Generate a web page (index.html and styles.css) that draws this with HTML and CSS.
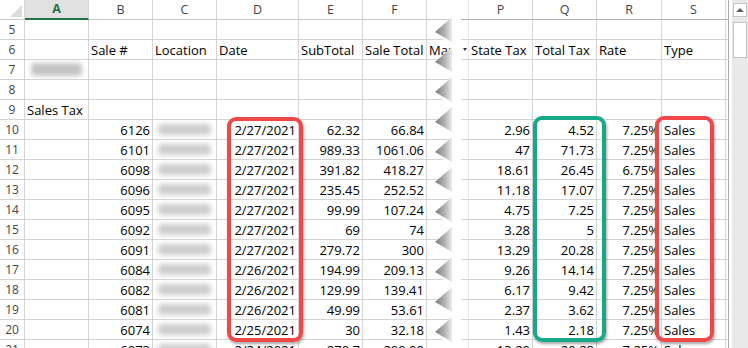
FILE: index.html
```html
<!DOCTYPE html>
<html>
<head>
<meta charset="utf-8">
<title>Sales Tax</title>
<link rel="stylesheet" href="styles.css">
</head>
<body>
<div class="app">
  <div class="pane left">
    <div class="hd corner"><svg width="24" height="19" viewBox="0 0 24 19"><polygon points="10,17 22,5 22,17" fill="#dcdcdc"/></svg></div>
    <div class="hd sel">A</div><div class="hd">B</div><div class="hd">C</div><div class="hd">D</div><div class="hd">E</div><div class="hd">F</div><div class="hd g"></div>

    <div class="rh">5</div><div class="c"></div><div class="c"></div><div class="c"></div><div class="c"></div><div class="c"></div><div class="c"></div><div class="c g"></div>
    <div class="rh">6</div><div class="c"></div><div class="c">Sale #</div><div class="c">Location</div><div class="c">Date</div><div class="c">SubTotal</div><div class="c">Sale Total</div><div class="c g">Manager</div>
    <div class="rh">7</div><div class="c"><span class="blur wide"></span></div><div class="c"></div><div class="c"></div><div class="c"></div><div class="c"></div><div class="c"></div><div class="c g"></div>
    <div class="rh">8</div><div class="c"></div><div class="c"></div><div class="c"></div><div class="c"></div><div class="c"></div><div class="c"></div><div class="c g"></div>
    <div class="rh">9</div><div class="c">Sales Tax</div><div class="c"></div><div class="c"></div><div class="c"></div><div class="c"></div><div class="c"></div><div class="c g"></div>

    <div class="rh">10</div><div class="c"></div><div class="c n">6126</div><div class="c"><span class="blur"></span></div><div class="c n">2/27/2021</div><div class="c n">62.32</div><div class="c n">66.84</div><div class="c g"></div>
    <div class="rh">11</div><div class="c"></div><div class="c n">6101</div><div class="c"><span class="blur"></span></div><div class="c n">2/27/2021</div><div class="c n">989.33</div><div class="c n">1061.06</div><div class="c g"></div>
    <div class="rh">12</div><div class="c"></div><div class="c n">6098</div><div class="c"><span class="blur"></span></div><div class="c n">2/27/2021</div><div class="c n">391.82</div><div class="c n">418.27</div><div class="c g"></div>
    <div class="rh">13</div><div class="c"></div><div class="c n">6096</div><div class="c"><span class="blur"></span></div><div class="c n">2/27/2021</div><div class="c n">235.45</div><div class="c n">252.52</div><div class="c g"></div>
    <div class="rh">14</div><div class="c"></div><div class="c n">6095</div><div class="c"><span class="blur"></span></div><div class="c n">2/27/2021</div><div class="c n">99.99</div><div class="c n">107.24</div><div class="c g"></div>
    <div class="rh">15</div><div class="c"></div><div class="c n">6092</div><div class="c"><span class="blur"></span></div><div class="c n">2/27/2021</div><div class="c n">69</div><div class="c n">74</div><div class="c g"></div>
    <div class="rh">16</div><div class="c"></div><div class="c n">6091</div><div class="c"><span class="blur"></span></div><div class="c n">2/27/2021</div><div class="c n">279.72</div><div class="c n">300</div><div class="c g"></div>
    <div class="rh">17</div><div class="c"></div><div class="c n">6084</div><div class="c"><span class="blur"></span></div><div class="c n">2/26/2021</div><div class="c n">194.99</div><div class="c n">209.13</div><div class="c g"></div>
    <div class="rh">18</div><div class="c"></div><div class="c n">6082</div><div class="c"><span class="blur"></span></div><div class="c n">2/26/2021</div><div class="c n">129.99</div><div class="c n">139.41</div><div class="c g"></div>
    <div class="rh">19</div><div class="c"></div><div class="c n">6081</div><div class="c"><span class="blur"></span></div><div class="c n">2/26/2021</div><div class="c n">49.99</div><div class="c n">53.61</div><div class="c g"></div>
    <div class="rh">20</div><div class="c"></div><div class="c n">6074</div><div class="c"><span class="blur"></span></div><div class="c n">2/25/2021</div><div class="c n">30</div><div class="c n">32.18</div><div class="c g"></div>
    <div class="rh">21</div><div class="c"></div><div class="c n">6073</div><div class="c"><span class="blur"></span></div><div class="c n">2/24/2021</div><div class="c n">279.7</div><div class="c n">299.99</div><div class="c g"></div>
  </div>

  <div class="pane right">
    <div class="hd p"></div><div class="hd">P</div><div class="hd">Q</div><div class="hd">R</div><div class="hd">S</div><div class="hd e"></div>

    <div class="c p"></div><div class="c"></div><div class="c"></div><div class="c"></div><div class="c"></div><div class="c e"></div>
    <div class="c p dd"><span class="arrow"></span></div><div class="c">State Tax</div><div class="c">Total Tax</div><div class="c">Rate</div><div class="c">Type</div><div class="c e"></div>
    <div class="c p"></div><div class="c"></div><div class="c"></div><div class="c"></div><div class="c"></div><div class="c e"></div>
    <div class="c p"></div><div class="c"></div><div class="c"></div><div class="c"></div><div class="c"></div><div class="c e"></div>
    <div class="c p"></div><div class="c"></div><div class="c"></div><div class="c"></div><div class="c"></div><div class="c e"></div>

    <div class="c p"></div><div class="c n">2.96</div><div class="c n">4.52</div><div class="c n">7.25%</div><div class="c">Sales</div><div class="c e"></div>
    <div class="c p"></div><div class="c n">47</div><div class="c n">71.73</div><div class="c n">7.25%</div><div class="c">Sales</div><div class="c e"></div>
    <div class="c p"></div><div class="c n">18.61</div><div class="c n">26.45</div><div class="c n">6.75%</div><div class="c">Sales</div><div class="c e"></div>
    <div class="c p"></div><div class="c n">11.18</div><div class="c n">17.07</div><div class="c n">7.25%</div><div class="c">Sales</div><div class="c e"></div>
    <div class="c p"></div><div class="c n">4.75</div><div class="c n">7.25</div><div class="c n">7.25%</div><div class="c">Sales</div><div class="c e"></div>
    <div class="c p"></div><div class="c n">3.28</div><div class="c n">5</div><div class="c n">7.25%</div><div class="c">Sales</div><div class="c e"></div>
    <div class="c p"></div><div class="c n">13.29</div><div class="c n">20.28</div><div class="c n">7.25%</div><div class="c">Sales</div><div class="c e"></div>
    <div class="c p"></div><div class="c n">9.26</div><div class="c n">14.14</div><div class="c n">7.25%</div><div class="c">Sales</div><div class="c e"></div>
    <div class="c p"></div><div class="c n">6.17</div><div class="c n">9.42</div><div class="c n">7.25%</div><div class="c">Sales</div><div class="c e"></div>
    <div class="c p"></div><div class="c n">2.37</div><div class="c n">3.62</div><div class="c n">7.25%</div><div class="c">Sales</div><div class="c e"></div>
    <div class="c p"></div><div class="c n">1.43</div><div class="c n">2.18</div><div class="c n">7.25%</div><div class="c">Sales</div><div class="c e"></div>
    <div class="c p"></div><div class="c n">13.29</div><div class="c n">20.28</div><div class="c n">7.25%</div><div class="c">Sales</div><div class="c e"></div>
  </div>

  <div class="gap"></div>

  <div class="vscroll">
    <div class="sb-btn"><svg width="12" height="12" viewBox="0 0 12 12"><polygon points="2,8 6,4 10,8" fill="#5f5f5f"/></svg></div>
    <div class="sb-thumb"></div>
  </div>

  <svg class="tear" width="40" height="348" viewBox="425 0 40 348">
    <defs>
      <linearGradient id="fold" gradientUnits="userSpaceOnUse" x1="435" y1="0" x2="453" y2="0">
        <stop offset="0" stop-color="#7c7c7c"/>
        <stop offset="0.55" stop-color="#b4b4b4"/>
        <stop offset="1" stop-color="#f4f4f4"/>
      </linearGradient>
    </defs>
    <polygon fill="#ffffff" points="461,15 452,15 452,17 435,32 452,47 435,62 452,77 435,92 452,107 435,122 452,137 435,152 452,167 435,182 452,197 435,212 452,227 435,242 452,257 435,272 452,287 435,302 452,317 435,332 452,347 452,348 461,348"/>
    <g fill="url(#fold)">
      <polygon points="452,17 435,32 452,42"/>
      <polygon points="452,47 435,62 452,72"/>
      <polygon points="452,77 435,92 452,102"/>
      <polygon points="452,107 435,122 452,132"/>
      <polygon points="452,137 435,152 452,162"/>
      <polygon points="452,167 435,182 452,192"/>
      <polygon points="452,197 435,212 452,222"/>
      <polygon points="452,227 435,242 452,252"/>
      <polygon points="452,257 435,272 452,282"/>
      <polygon points="452,287 435,302 452,312"/>
      <polygon points="452,317 435,332 452,342"/>
    </g>
  </svg>

  <div class="hl red box-date"></div>
  <div class="hl green box-tax"></div>
  <div class="hl red box-type"></div>
</div>
</body>
</html>
```

FILE: styles.css
```css
* {
  box-sizing: border-box;
  margin: 0;
  padding: 0;
}

body {
  margin: 0;
  background: #ffffff;
  font-family: "Open Sans", "Liberation Sans", sans-serif;
}

.app {
  position: relative;
  display: flex;
  width: 748px;
  height: 348px;
  overflow: hidden;
  background: #ffffff;
}

.pane {
  display: grid;
  grid-auto-rows: 20px;
  align-content: start;
  flex: none;
}

.left {
  width: 458px;
  grid-template-columns: 25px 64px 64px 64px 82px 64px 64px 31px;
}

.right {
  width: 271px;
  grid-template-columns: 11px 64px 64px 65px 64px 3px;
}

.hd {
  border-right: 1px solid #d4d4d4;
  border-bottom: 1px solid #c8c8c8;
  text-align: center;
  font-size: 12.5px;
  line-height: 19px;
  color: #444444;
  background: #ffffff;
}

.corner {
  padding: 0;
  line-height: 0;
}

.hd.sel {
  background: #e1e1e1;
  color: #217346;
  font-weight: 700;
  border-bottom: 2px solid #217346;
  line-height: 18px;
}

.right .hd {
  border-bottom-color: #ababab;
}

.rh {
  border-right: 1px solid #d4d4d4;
  border-bottom: 1px solid #d4d4d4;
  text-align: center;
  font-size: 12px;
  line-height: 20px;
  color: #444444;
}

.c {
  border-right: 1px solid #d4d4d4;
  border-bottom: 1px solid #d4d4d4;
  padding: 0 2px;
  font-size: 13px;
  line-height: 20px;
  color: #000000;
  white-space: nowrap;
  overflow: hidden;
}

.n {
  text-align: right;
}

.g {
  border-right: none;
}

.p {
  border-right-color: #e6e6e6;
}

.e {
  padding: 0;
  border-right: 1px solid #ababab;
}

.dd {
  display: flex;
  justify-content: flex-end;
  align-items: center;
  padding: 0 1px 0 0;
}

.arrow {
  width: 0;
  height: 0;
  border-left: 2.5px solid transparent;
  border-right: 2.5px solid transparent;
  border-top: 3px solid #333333;
}

.blur {
  display: block;
  height: 11px;
  margin: 4px 3px 0;
  background: #cdcdcd;
  border-radius: 4px;
  filter: blur(2.5px);
}

.blur.wide {
  height: 13px;
  margin: 3px 4px 0;
  background: #c4c4c4;
}

.gap {
  width: 3px;
  flex: none;
}

.vscroll {
  width: 16px;
  flex: none;
  display: flex;
  flex-direction: column;
  align-items: center;
  gap: 5px;
  padding-top: 3px;
  background: #e9e9e9;
}

.sb-btn {
  width: 14px;
  height: 14px;
  background: #ffffff;
  border: 1px solid #c6c6c6;
  display: flex;
  align-items: center;
  justify-content: center;
}

.sb-thumb {
  width: 14px;
  height: 36px;
  background: #ffffff;
  border: 1px solid #c2c2c2;
}

.tear {
  position: absolute;
  left: 425px;
  top: 0;
}

.hl {
  position: absolute;
  border: 4px solid #f04848;
  border-radius: 9px;
  box-shadow: 1px 2px 3px rgba(0, 0, 0, 0.35);
}

.hl.green {
  border-color: #15a98a;
}

.box-date {
  left: 227px;
  top: 117px;
  width: 76px;
  height: 225px;
}

.box-tax {
  left: 533px;
  top: 116px;
  width: 73px;
  height: 226px;
}

.box-type {
  left: 655px;
  top: 116px;
  width: 59px;
  height: 226px;
}
```
